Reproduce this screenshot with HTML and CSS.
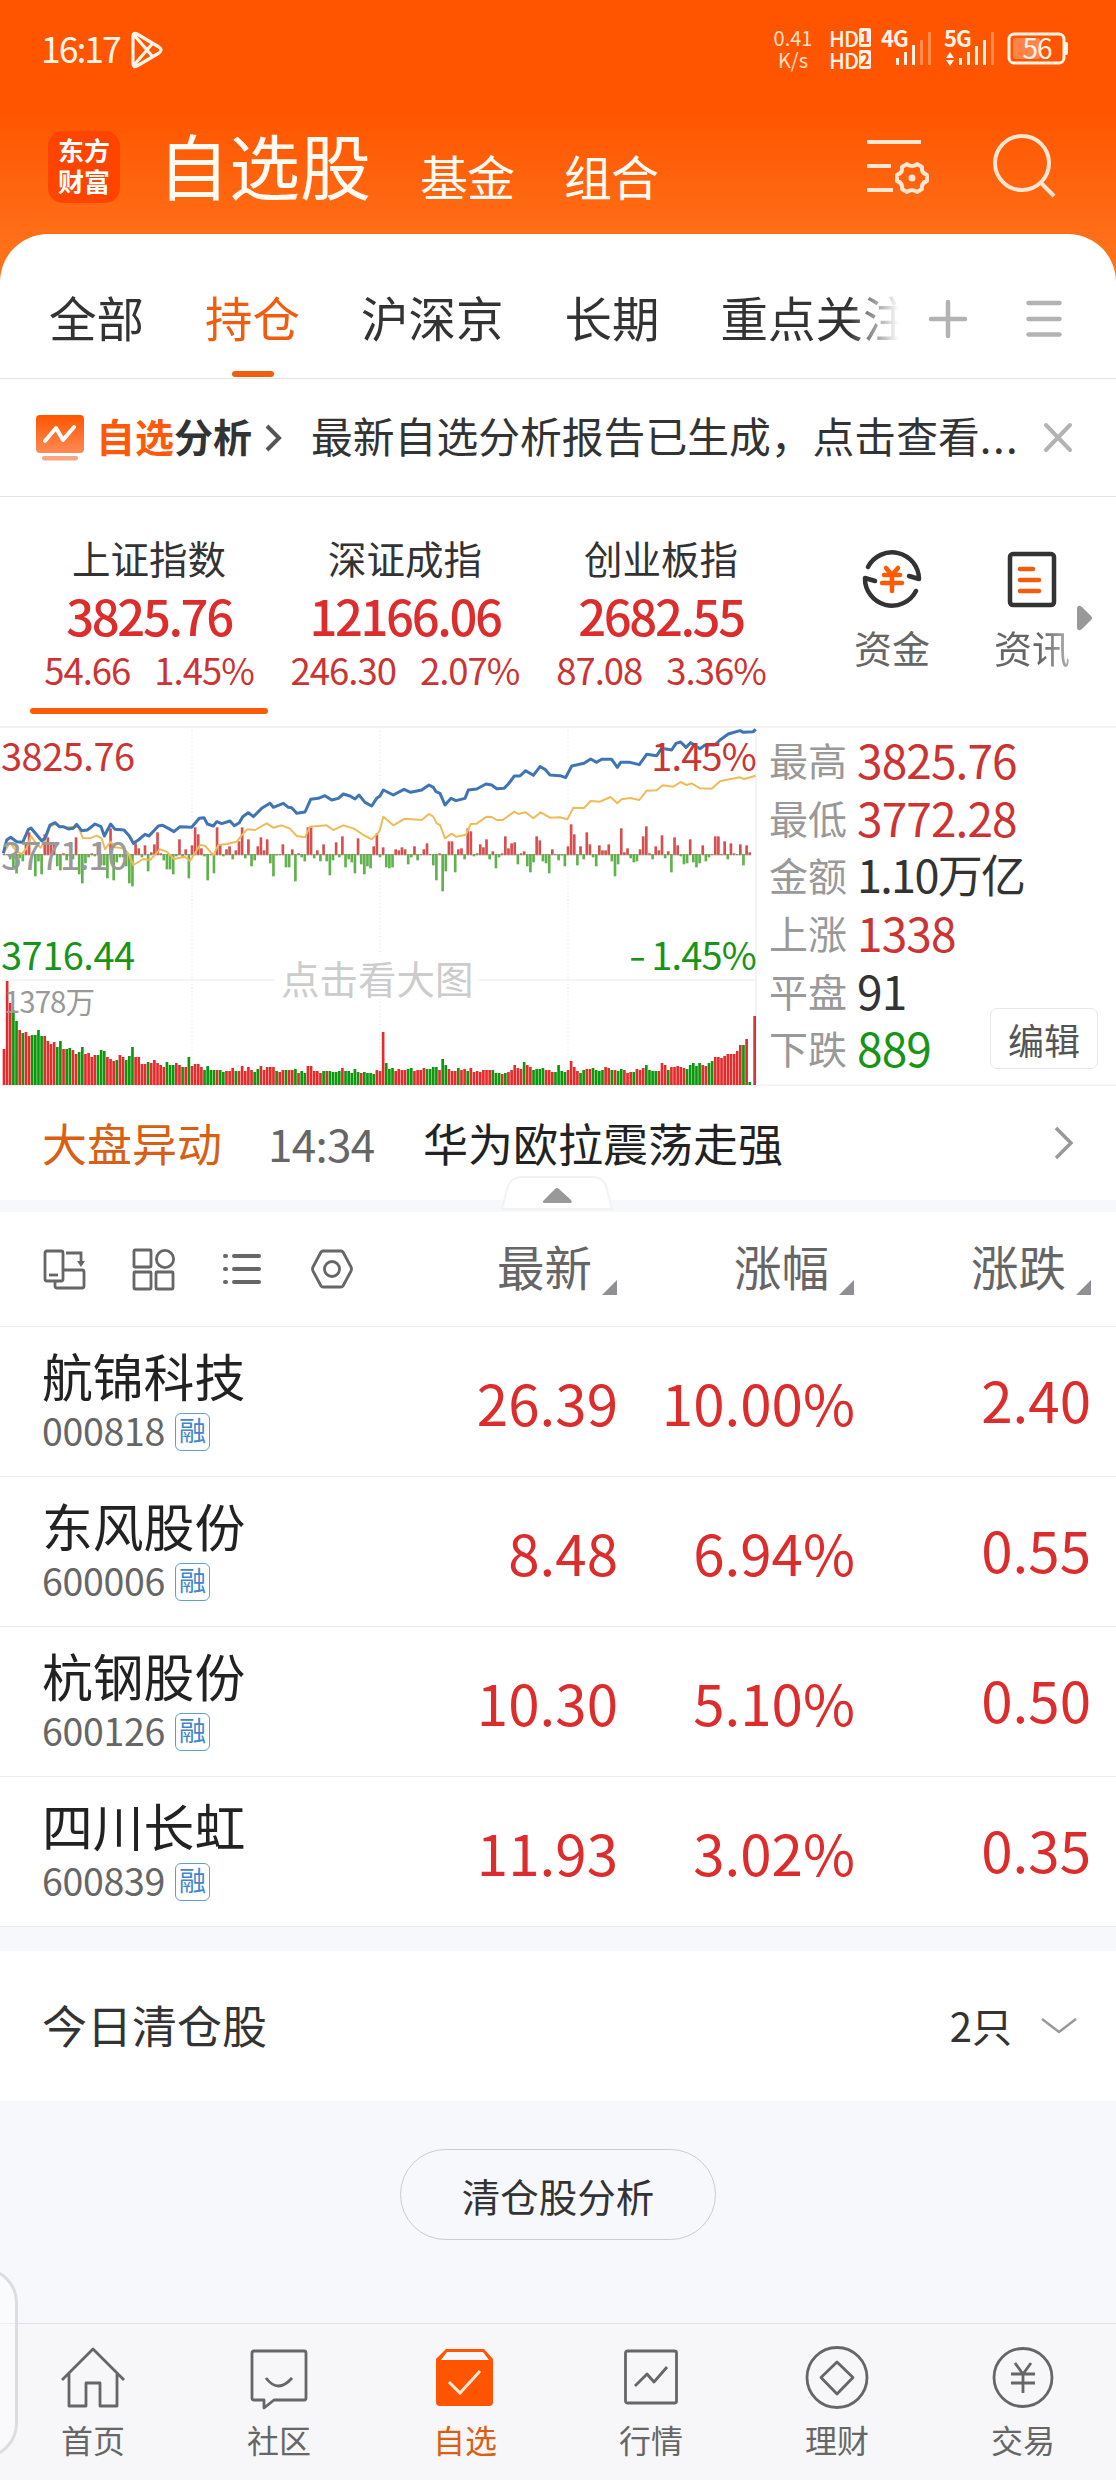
FILE: index.html
```html
<!DOCTYPE html>
<html lang="zh-CN">
<head>
    <meta charset="UTF-8">
    <meta name="viewport" content="width=device-width, initial-scale=1.0">
    <title>自选股</title>
    <link rel="stylesheet" href="styles.css">
</head>
<body>
    <div class="status-bar">
        <span class="clock">16:17</span>
        <svg class="play-icon" width="32" height="38" viewBox="0 0 32 38" fill="none" stroke="#fff4e6" stroke-width="3.2" stroke-linejoin="round">
            <path d="M2 5Q2 1 6 3L28 16Q32 19 28 22L6 35Q2 37 2 33ZM3 4L22 26M3 34L22 12"/>
        </svg>
        <div class="net-speed"><span>0.41</span><span>K/s</span></div>
        <div class="hd">
            <span>HD<b>1</b></span>
            <span>HD<b>2</b></span>
        </div>
        <svg class="signal" width="52" height="40" viewBox="0 0 52 40" fill="#fff4e6">
            <text x="0" y="18" class="signal-text">4G</text>
            <rect x="15" y="29" width="3" height="7"/><rect x="23" y="23" width="3" height="13"/><rect x="31" y="16" width="3" height="20"/>
            <rect x="39" y="11" width="3" height="25" opacity=".35"/><rect x="47" y="3" width="3" height="33" opacity=".35"/>
        </svg>
        <svg class="signal second" width="52" height="40" viewBox="0 0 52 40" fill="#fff4e6">
            <text x="0" y="18" class="signal-text">5G</text>
            <path d="M2 29L6 23L10 29ZM2 31H10L6 37Z"/>
            <rect x="15" y="29" width="3" height="7"/><rect x="23" y="23" width="3" height="13"/><rect x="31" y="17" width="3" height="19"/>
            <rect x="39" y="11" width="3" height="25"/><rect x="47" y="3" width="3" height="33" opacity=".35"/>
        </svg>
        <svg class="battery" width="62" height="34" viewBox="0 0 62 34">
            <rect x="2" y="2" width="55" height="29" rx="5" fill="none" stroke="#fff4e6" stroke-width="3"/>
            <rect x="6" y="6" width="27" height="21" rx="2" fill="#ff8448"/>
            <path d="M58 10h1.500q1.500 0 1.500 2v9q0 2-1.500 2H58Z" fill="#fff4e6"/>
            <text x="30" y="27" text-anchor="middle" class="battery-text">56</text>
        </svg>
    </div>

    <header class="title-bar">
        <div class="logo"><span>东方</span><span>财富</span></div>
        <h1>自选股</h1>
        <a class="title-link">基金</a>
        <a class="title-link">组合</a>
        <svg class="manage-icon" width="64" height="62" viewBox="0 0 64 62" fill="none" stroke="#ffe6d3" stroke-width="4">
            <path d="M1 7H55M1 31H25M1 55H27"/>
            <path d="M41 29Q46 33 51 29L56 32Q55 38 61 40V46Q55 48 56 54L51 57Q46 53 41 57L36 54Q37 48 31 46V40Q37 38 36 32Z" stroke-linejoin="round"/>
            <circle cx="46" cy="43" r="3.500" fill="#ffe6d3" stroke="none"/>
        </svg>
        <svg class="search-icon" width="66" height="66" viewBox="0 0 66 66" fill="none" stroke="#ffe6d3" stroke-width="4">
            <circle cx="30" cy="30" r="27"/>
            <path d="M48 49L62 63"/>
        </svg>
    </header>

    <main class="sheet">
        <nav class="tabs">
            <div class="tab-list">
                <a>全部</a>
                <a class="active">持仓</a>
                <a>沪深京</a>
                <a>长期</a>
                <a>重点关注</a>
            </div>
            <svg class="plus-icon" width="40" height="40" viewBox="0 0 40 40" stroke="#b3b3b3" stroke-width="4.500" stroke-linecap="round"><path d="M3 20H37M20 3V37"/></svg>
            <svg class="menu-icon" width="36" height="40" viewBox="0 0 36 40" stroke="#b3b3b3" stroke-width="4.500" stroke-linecap="round"><path d="M2.500 4H33.500M2.500 20H33.500M2.500 35.500H33.500"/></svg>
        </nav>

        <div class="notice">
            <svg class="notice-icon" width="48" height="46" viewBox="0 0 48 46" fill="none">
                <defs><linearGradient id="ng" x1="0" y1="0" x2="0" y2="1"><stop offset="0" stop-color="#ff5500"/><stop offset="1" stop-color="#ff8a55"/></linearGradient></defs>
                <rect width="48" height="38" rx="4" fill="url(#ng)"/>
                <rect x="6" y="41" width="36" height="4.500" rx="2" fill="#f7a583"/>
                <path d="M9 26L20 13L27 25L38 12" stroke="#fff" stroke-width="4" stroke-linejoin="round" stroke-linecap="round"/>
            </svg>
            <strong class="notice-title"><em>自选</em>分析</strong>
            <svg class="notice-arrow" width="18" height="30" viewBox="0 0 18 30" fill="none" stroke="#555" stroke-width="4"><path d="M2 3L14 15L2 27"/></svg>
            <span class="notice-text">最新自选分析报告已生成，点击查看<i>...</i></span>
            <svg class="close-icon" width="30" height="32" viewBox="0 0 30 32" stroke="#b3b3b3" stroke-width="4" stroke-linecap="round"><path d="M3 3L27 28M27 3L3 28"/></svg>
        </div>

        <section class="indices">
            <div class="index active">
                <span class="index-name">上证指数</span>
                <span class="index-value">3825.76</span>
                <span class="index-change"><span>54.66</span><span>1.45%</span></span>
            </div>
            <div class="index">
                <span class="index-name">深证成指</span>
                <span class="index-value">12166.06</span>
                <span class="index-change"><span>246.30</span><span>2.07%</span></span>
            </div>
            <div class="index">
                <span class="index-name">创业板指</span>
                <span class="index-value">2682.55</span>
                <span class="index-change"><span>87.08</span><span>3.36%</span></span>
            </div>
            <div class="tool">
                <svg width="60" height="62" viewBox="0 0 60 62" fill="none" stroke="#333" stroke-width="4.500" stroke-linejoin="round">
                    <path d="M6 20A27 27 0 0 1 57 32L47 29" stroke-linecap="round"/>
                    <path d="M54 44A27 27 0 0 1 3 31L13 34" stroke-linecap="round"/>
                    <path d="M24 21L30 28L36 21M22 28H38M20 36H40M30 28V44" stroke="#ff5a00" stroke-linecap="round"/>
                </svg>
                <span>资金</span>
            </div>
            <div class="tool news">
                <svg width="60" height="62" viewBox="0 0 60 62" fill="none" stroke="#333" stroke-width="4.500">
                    <rect x="8" y="7" width="44" height="51" rx="3"/>
                    <path d="M18 22H31M18 33H37M18 44H37" stroke="#f25c0f" stroke-linecap="round"/>
                </svg>
                <span>资讯</span>
            </div>
            <svg class="more-arrow" width="16" height="26" viewBox="0 0 16 26" fill="#999"><path d="M0 3Q1-1 5 2L14 11Q16 13 14 15L5 24Q1 27 0 23Z"/></svg>
        </section>

        <section class="market">
            <div class="chart">
                <svg class="chart-svg" viewBox="0 48 2280 1086">
                    <path class="grid" d="M0 51H2271M2268 51V1125M0 810H2271M0 1125H2271"/>
                    <path class="grid-dots" d="M576 51V1125M1140 51V1125M1704 51V1125"/>
                    <g id="volume"></g>
                    <g id="momentum"></g>
                    <polyline class="line-avg" points="10,430 30,398 50,425 65,432 80,415 93,378 108,400 122,413 135,395 150,350 165,342 190,352 235,350 248,384 270,385 290,377 305,385 315,418 332,395 345,412 370,415 385,430 400,465 430,447 450,450 480,418 500,425 522,447 555,440 570,453 600,405 615,407 640,436 655,405 680,402 710,395 730,370 742,358 765,360 800,340 820,353 845,346 870,356 890,378 915,382 930,350 980,346 1000,360 1030,346 1062,356 1090,375 1115,388 1138,365 1150,320 1180,346 1215,326 1265,330 1287,312 1300,320 1310,340 1320,345 1335,385 1355,371 1368,380 1398,374 1412,342 1430,341 1460,320 1475,321 1490,330 1508,330 1543,305 1555,312 1577,307 1600,325 1622,307 1650,323 1680,322 1702,328 1720,293 1752,294 1772,273 1800,275 1832,261 1852,280 1865,268 1890,264 1918,270 1940,242 1970,241 1988,226 2020,230 2042,216 2060,225 2075,220 2100,235 2135,236 2160,214 2180,209 2220,202 2232,207 2267,197"/>
                    <polyline class="line-price" points="10,430 20,390 32,382 50,395 68,397 85,358 93,354 108,372 125,392 135,385 150,345 165,338 178,350 190,350 205,357 220,355 230,343 245,362 262,360 285,342 303,350 313,378 332,342 345,358 372,360 388,378 400,400 415,390 435,373 447,378 475,348 488,346 505,355 522,365 540,350 575,352 598,325 612,323 622,342 640,348 650,335 665,341 690,333 703,347 718,338 728,320 745,308 760,320 785,295 810,280 820,292 850,280 865,292 875,293 890,310 915,306 932,268 955,265 975,257 995,270 1015,265 1030,252 1050,258 1065,267 1077,255 1095,277 1115,288 1130,265 1140,258 1150,240 1180,255 1212,238 1232,247 1265,240 1287,225 1300,232 1308,245 1320,250 1335,285 1353,265 1368,272 1395,265 1405,240 1430,237 1458,222 1475,225 1490,236 1512,235 1525,222 1543,198 1560,198 1577,182 1600,196 1620,170 1635,178 1650,195 1680,197 1697,203 1715,168 1752,160 1772,147 1790,157 1805,148 1835,148 1852,172 1862,157 1890,157 1918,164 1940,133 1970,137 1985,115 2015,120 2028,100 2042,96 2058,112 2072,98 2100,116 2115,105 2145,105 2160,90 2185,72 2220,62 2230,67 2260,65 2267,58"/>
                </svg>
                <span class="label high">3825.76</span>
                <span class="label high-pct">1.45%</span>
                <span class="label base">3771.10</span>
                <span class="label low">3716.44</span>
                <span class="label low-pct"><i>-</i>1.45%</span>
                <span class="label vol">1378万</span>
                <span class="label hint">点击看大图</span>
            </div>
            <div class="stats">
                <div><span>最高</span><b class="up">3825.76</b></div>
                <div><span>最低</span><b class="up">3772.28</b></div>
                <div><span>金额</span><b class="amount">1.10万亿</b></div>
                <div><span>上涨</span><b class="up">1338</b></div>
                <div><span>平盘</span><b>91</b></div>
                <div><span>下跌</span><b class="down">889</b></div>
                <button class="edit-button">编辑</button>
            </div>
        </section>

        <div class="alert-row">
            <span class="alert-title">大盘异动</span>
            <span class="alert-time">14:34</span>
            <span class="alert-text">华为欧拉震荡走强</span>
            <svg width="20" height="34" viewBox="0 0 20 34" fill="none" stroke="#999" stroke-width="3.500"><path d="M2 2L17 17L2 32"/></svg>
        </div>
        <div class="band">
            <svg class="collapse" width="112" height="34" viewBox="0 0 112 34">
                <path d="M1 33L6 13Q9 1 21 1H91Q103 1 106 13L111 33Z" fill="#fff" stroke="#f1f2f4" stroke-width="2"/>
                <path d="M43 24L54 13Q56 11 58 13L70 24Q72 27 69 27H44Q40 27 43 24Z" fill="#999"/>
            </svg>
        </div>

        <section class="stocks">
            <div class="stocks-head">
                <div class="view-icons">
                    <svg width="44" height="44" viewBox="0 0 44 44" fill="none" stroke="#666" stroke-width="2.800">
                        <rect x="2" y="4" width="18" height="30" rx="2"/><path d="M6 28H15"/>
                        <path d="M12 34V39Q12 41 14 41H39Q41 41 41 39V25Q41 23 39 23H20M23 6H38V17"/><path d="M34 14H42L38 20Z" fill="#666" stroke="none"/>
                    </svg>
                    <svg width="44" height="44" viewBox="0 0 44 44" fill="none" stroke="#666" stroke-width="2.800">
                        <rect x="2" y="3" width="17" height="17" rx="1"/><circle cx="33" cy="12" r="8.600"/>
                        <rect x="2" y="25" width="17" height="17" rx="1"/><rect x="24" y="25" width="17" height="17" rx="1"/>
                    </svg>
                    <svg width="44" height="44" viewBox="0 0 44 44" stroke="#666" stroke-width="4" stroke-linecap="round">
                        <path d="M4 9H5M13 9H38M4 22H5M13 22H38M4 35H5M13 35H38"/>
                    </svg>
                    <svg width="44" height="44" viewBox="0 0 44 44" fill="none" stroke="#666" stroke-width="2.800" stroke-linejoin="round">
                        <path d="M13 4H31Q32 4 33 5L41 20Q42 22 41 24L33 39Q32 40 31 40H13Q12 40 11 39L3 24Q2 22 3 20L11 5Q12 4 13 4Z"/><circle cx="22" cy="22" r="7.500"/>
                    </svg>
                </div>
                <span class="sort">最新</span>
                <span class="sort">涨幅</span>
                <span class="sort">涨跌</span>
            </div>
            <div class="stock">
                <div class="stock-name">航锦科技<small>000818<i>融</i></small></div>
                <span>26.39</span><span>10.00%</span><span>2.40</span>
            </div>
            <div class="stock">
                <div class="stock-name">东风股份<small>600006<i>融</i></small></div>
                <span>8.48</span><span>6.94%</span><span>0.55</span>
            </div>
            <div class="stock">
                <div class="stock-name">杭钢股份<small>600126<i>融</i></small></div>
                <span>10.30</span><span>5.10%</span><span>0.50</span>
            </div>
            <div class="stock">
                <div class="stock-name">四川长虹<small>600839<i>融</i></small></div>
                <span>11.93</span><span>3.02%</span><span>0.35</span>
            </div>
        </section>

        <div class="cleared">
            <span>今日清仓股</span>
            <span class="count">2只</span>
            <svg width="36" height="18" viewBox="0 0 36 18" fill="none" stroke="#999" stroke-width="2.500"><path d="M1 2L18 15L35 2"/></svg>
        </div>
        <div class="cleared-action"><button>清仓股分析</button></div>
    </main>

    <footer class="bottom-nav">
        <a>
            <svg width="68" height="68" viewBox="0 0 68 68" fill="none" stroke="#666" stroke-width="2.800" stroke-linejoin="round">
                <path d="M3 36L34 5L65 36M10 30V62H27V39H41V62H58V30"/>
            </svg>
            首页
        </a>
        <a>
            <svg width="68" height="68" viewBox="0 0 68 68" fill="none" stroke="#666" stroke-width="2.800" stroke-linejoin="round">
                <path d="M9 7H59Q61 7 61 9V54Q61 56 59 56H29L19 64V56H9Q7 56 7 54V9Q7 7 9 7Z"/><path d="M21 34Q33 50 47 34"/>
            </svg>
            社区
        </a>
        <a class="active">
            <svg width="68" height="68" viewBox="0 0 68 68" fill="none">
                <path d="M15 5H53L62 15V58Q62 62 58 62H9Q5 62 5 58V15Z" fill="#ff5500"/>
                <path d="M16 8H52L58 16H10Z" fill="#f7f7fa"/><path d="M18 38L29 49L49 27" stroke="#ffe9d6" stroke-width="3"/>
            </svg>
            自选
        </a>
        <a>
            <svg width="68" height="68" viewBox="0 0 68 68" fill="none" stroke="#666" stroke-width="2.800" stroke-linejoin="round">
                <rect x="8.500" y="7" width="51" height="52" rx="2"/><path d="M18 42L30 30L37 38L50 23"/>
            </svg>
            行情
        </a>
        <a>
            <svg width="68" height="68" viewBox="0 0 68 68" fill="none" stroke="#666" stroke-width="2.800" stroke-linejoin="round">
                <circle cx="34" cy="33.500" r="30"/><path d="M34 18L50 33.500L34 50L18 33.500Z"/>
            </svg>
            理财
        </a>
        <a>
            <svg width="68" height="68" viewBox="0 0 68 68" fill="none" stroke="#666" stroke-width="2.800">
                <circle cx="34" cy="33.500" r="29"/><path d="M26 19L34 30L42 19M22 30H46M22 39H46M34 30V49"/>
            </svg>
            交易
        </a>
    </footer>
    <div class="edge-handle"></div>

    <script src="chart.js"></script>
</body>
</html>
```
FILE: styles.css
```css
* {
    box-sizing: border-box;
}

body {
    margin: 0;
    width: 1116px;
    height: 2480px;
    overflow: hidden;
    position: relative;
    display: flex;
    flex-direction: column;
    font-family: "Noto Sans CJK SC", sans-serif;
    color: #333;
    background: #f7f8fb linear-gradient(#ff5500 0, #ff5500 110px, #ff7019 245px) no-repeat top / 100% 300px;
}

h1 {
    margin: 0;
    font-weight: 400;
}

em,
i {
    font-style: normal;
}

svg {
    display: block;
    flex: none;
}

button {
    font-family: inherit;
    padding: 0;
    background: none;
}

/* Status bar */
.status-bar {
    height: 98px;
    padding: 0 47px 0 41px;
    display: flex;
    align-items: center;
    color: #fff4e6;
}

.clock {
    width: 90px;
    margin-top: -2px;
    font-size: 35.5px;
    line-height: 40px;
    letter-spacing: -2px;
}

.play-icon {
    margin-top: 1px;
    margin-right: auto;
}

.net-speed {
    width: 40px;
    margin-right: 16px;
    display: flex;
    flex-direction: column;
    align-items: center;
    font-size: 20px;
    line-height: 22px;
    color: #ffe0c8;
}

.hd {
    width: 52px;
    display: flex;
    flex-direction: column;
    gap: 2px;
    font-size: 21.5px;
    font-weight: 500;
    line-height: 20px;
    letter-spacing: -1px;
}

.hd span {
    display: flex;
}

.hd b {
    width: 12px;
    height: 19px;
    margin-left: 1px;
    background: #fff4e6;
    color: #ff5500;
    border-radius: 2px;
    font-size: 17px;
    line-height: 17px;
    letter-spacing: 0;
    text-align: center;
}

.signal {
    overflow: visible;
}

.signal.second {
    margin: 0 11px 0 11px;
}

.signal-text {
    font-size: 22px;
    font-weight: 700;
    letter-spacing: -1px;
}

.battery-text {
    font-size: 28px;
    fill: #fff4e6;
    letter-spacing: -1px;
}

/* Title bar */
.title-bar {
    height: 136px;
    padding: 33px 0 0 48px;
    display: flex;
    align-items: flex-start;
    color: #fffaf2;
}

.logo {
    width: 72px;
    height: 72px;
    padding: 3px 0 0 10px;
    border-radius: 15px;
    background: #ff4400;
    display: flex;
    flex-direction: column;
    font-size: 26px;
    font-weight: 700;
    line-height: 31px;
    color: #fff;
}

.title-bar h1 {
    width: 256px;
    padding-left: 38px;
    margin-top: -6px;
    font-size: 71px;
    line-height: 76px;
    white-space: nowrap;
}

.title-bar h1 + .title-link {
    margin-left: 44px;
}

.title-link {
    width: 144px;
    margin-top: 16px;
    font-size: 48px;
    line-height: 56px;
    letter-spacing: -1px;
}

.manage-icon {
    margin: 4px 62px 0 158px;
}

.search-icon {
    margin-top: 2px;
}

/* Sheet */
.sheet {
    flex: 1;
}

.tabs {
    height: 145px;
    padding-left: 49px;
    border-radius: 48px 48px 0 0;
    border-bottom: 1px solid #e3e3e3;
    background: #fff;
    display: flex;
    align-items: center;
}

.tab-list {
    width: 850px;
    height: 145px;
    display: flex;
    gap: 61px;
    overflow: hidden;
    white-space: nowrap;
    font-size: 47.5px;
    line-height: 165px;
    -webkit-mask-image: linear-gradient(90deg, #000 800px, transparent 850px);
    mask-image: linear-gradient(90deg, #000 800px, transparent 850px);
}

.tab-list a {
    flex: none;
}

.tab-list .active {
    color: #f25c0f;
    position: relative;
}

.tab-list .active::after {
    content: "";
    position: absolute;
    left: 27px;
    bottom: 2px;
    width: 42px;
    height: 6px;
    border-radius: 3px;
    background: #f25c0f;
}

.plus-icon {
    margin: 25px 58px 0 29px;
}

.menu-icon {
    margin-top: 25px;
}

.notice {
    height: 118px;
    padding-left: 36px;
    border-bottom: 1px solid #e3e3e3;
    background: #fff;
    display: flex;
    align-items: center;
}

.notice-title {
    width: 169px;
    margin-left: 12px;
    font-size: 39px;
    line-height: 44px;
    margin-top: -6px;
}

.notice-title em {
    color: #ff5a0a;
}

.notice-text {
    width: 732px;
    margin: -6px 0 0 28px;
    font-size: 41.8px;
    line-height: 50px;
    white-space: nowrap;
}

.notice-text i {
    letter-spacing: 1.5px;
}

.notice-arrow {
    margin-left: 0;
}

/* Indices */
.indices {
    height: 229px;
    padding-left: 21px;
    background: #fff;
    display: flex;
    position: relative;
}

.index {
    width: 256px;
    padding-top: 32px;
    display: flex;
    flex-direction: column;
    align-items: center;
    position: relative;
}

.index-name {
    font-size: 38.5px;
    line-height: 56px;
}

.index-value {
    font-size: 49px;
    font-weight: 500;
    line-height: 60px;
    letter-spacing: -2.4px;
    color: #dc2c2c;
}

.index-change {
    display: flex;
    gap: 24px;
    padding-top: 2px;
    font-size: 36.5px;
    line-height: 46px;
    letter-spacing: -1px;
    color: #cc3434;
}

.index.active::after {
    content: "";
    position: absolute;
    left: 9px;
    bottom: 12px;
    width: 238px;
    height: 6px;
    border-radius: 3px;
    background: #ff5a0a;
}

.tool {
    width: 140px;
    margin-left: 33px;
    padding-top: 50px;
    display: flex;
    flex-direction: column;
    align-items: center;
    font-size: 38px;
    line-height: 76px;
    color: #666;
}

.tool.news {
    margin-left: 0;
}

.tool.news span {
    -webkit-mask-image: linear-gradient(90deg, #000 60%, rgba(0, 0, 0, 0.5));
    mask-image: linear-gradient(90deg, #000 60%, rgba(0, 0, 0, 0.5));
}

.more-arrow {
    position: absolute;
    right: 23px;
    top: 108px;
}

/* Chart */
.market {
    height: 360px;
    border-top: 2px solid #f4f4f4;
    border-bottom: 2px solid #f4f4f4;
    background: #fff;
    display: flex;
}

.chart {
    width: 760px;
    position: relative;
}

.chart-svg {
    width: 760px;
    height: 362px;
    margin-top: -2px;
}

.grid {
    fill: none;
    stroke: #f2f2f2;
    stroke-width: 5;
}

.grid-dots {
    stroke: #eeeeee;
    stroke-width: 4;
    stroke-dasharray: 4 7;
}

.line-avg,
.line-price {
    fill: none;
    stroke-width: 6;
    stroke: #efbb59;
    stroke-linejoin: round;
}

.line-price {
    stroke-width: 9;
    stroke: #3f74b5;
}

.label {
    position: absolute;
    left: 1px;
    font-size: 38px;
    line-height: 40px;
    letter-spacing: -0.5px;
    color: #cc3434;
}

.high {
    top: 7px;
}

.high-pct,
.low-pct {
    left: auto;
    right: 4px;
    top: 7px;
    letter-spacing: -0.8px;
}

.low-pct i {
    display: inline-block;
    width: 14px;
    margin-right: 6px;
    transform: scaleX(1.3);
}

.base {
    top: 106px;
    color: #999;
    letter-spacing: -1.6px;
}

.low,
.low-pct {
    top: 206px;
    color: #189418;
}

.vol {
    left: 4px;
    top: 252px;
    font-size: 29.5px;
    letter-spacing: -1px;
    color: #999;
}

.hint {
    left: 275px;
    top: 227px;
    width: 203px;
    padding-left: 6px;
    line-height: 44px;
    font-size: 38.5px;
    letter-spacing: 0;
    color: #ccc;
    background: #fff;
}

.stats {
    flex: 1;
    padding: 2px 0 0 9px;
    position: relative;
}

.stats div {
    height: 57.7px;
    display: flex;
    align-items: center;
    font-size: 39px;
    line-height: 50px;
    color: #999;
}

.stats b {
    margin-left: 10px;
    font-size: 46px;
    font-weight: 400;
    letter-spacing: -0.9px;
    color: #333;
}

.stats .amount {
    font-size: 45px;
    letter-spacing: -1.7px;
}

.stats .up {
    color: #cc3434;
}

.stats .down {
    color: #189418;
}

.edit-button {
    position: absolute;
    right: 18px;
    bottom: 15px;
    width: 108px;
    height: 61px;
    border: 1px solid #e8e8e8;
    border-radius: 7px;
    font-size: 36px;
    line-height: 50px;
    color: #555;
    background: #fff;
}

/* Alert row */
.alert-row {
    height: 114px;
    padding: 0 42px 0 42px;
    background: #fff;
    display: flex;
    align-items: center;
    font-size: 45px;
    line-height: 106px;
}

.alert-row svg {
    margin-left: auto;
}

.alert-title {
    width: 226px;
    color: #d95f14;
}

.alert-time {
    width: 155px;
    font-size: 44px;
    letter-spacing: -0.7px;
    color: #666;
}

.alert-text {
    color: #222;
}

.band {
    height: 12px;
    position: relative;
}

.collapse {
    position: absolute;
    left: 501px;
    top: -24px;
}

/* Stock table */
.stocks {
    background: #fff;
}

.stocks-head,
.stock {
    display: grid;
    grid-template-columns: 397px 220px 237px 1fr;
    align-items: center;
    padding-right: 25px;
    border-bottom: 1px solid #ececec;
}

.stocks-head {
    height: 115px;
}

.view-icons {
    display: flex;
    gap: 45px;
    padding-left: 43px;
}

.sort {
    padding-right: 25px;
    position: relative;
    text-align: right;
    font-size: 47.5px;
    line-height: 50px;
    color: #666;
    margin-top: -6px;
}

.sort::after {
    content: "";
    position: absolute;
    right: 0;
    bottom: -4px;
    border-left: 15px solid transparent;
    border-bottom: 15px solid #8f8f94;
}

.stock {
    height: 150px;
}

.stock-name {
    padding-left: 42px;
    margin-top: -7px;
    font-size: 50.8px;
    line-height: 62px;
    color: #222;
}

.stock-name small {
    display: flex;
    align-items: center;
    padding-top: 2px;
    font-size: 37.5px;
    line-height: 44px;
    letter-spacing: -0.3px;
    color: #666;
}

.stock-name i {
    width: 35px;
    height: 38px;
    margin: 3px 0 0 10px;
    border: 1.5px solid #5f9ed6;
    border-radius: 6px;
    font-size: 27px;
    line-height: 31px;
    letter-spacing: 0;
    text-align: center;
    color: #3f85cf;
}

.stock > span {
    text-align: right;
    font-size: 56.5px;
    line-height: 70px;
    margin-top: -1px;
    margin-right: -1px;
    color: #dc2c2c;
}

.stock > span:last-child {
    margin-top: -8px;
    padding-right: 1px;
}

/* Cleared positions */
.cleared {
    height: 150px;
    margin-top: 24px;
    padding: 0 39px 0 42px;
    background: #fff;
    display: flex;
    align-items: center;
    font-size: 45px;
    line-height: 144px;
}

.cleared > span {
    margin-top: -2px;
}

.cleared .count {
    margin: -2px 29px 0 auto;
    font-size: 40px;
}

.cleared-action {
    padding-top: 48px;
    display: flex;
    justify-content: center;
}

.cleared-action button {
    width: 316px;
    height: 91px;
    border: 1.5px solid #ccc;
    border-radius: 46px;
    font-size: 38.5px;
    line-height: 80px;
    color: #333;
}

/* Bottom nav */
.bottom-nav {
    height: 157px;
    border-top: 1px solid #e0e1e4;
    background: #f7f7fa;
    display: flex;
}

.bottom-nav a {
    flex: 1;
    padding-top: 20px;
    display: flex;
    flex-direction: column;
    align-items: center;
    font-size: 32px;
    line-height: 54px;
    color: #666;
}

.bottom-nav .active {
    color: #d95f14;
}

.edge-handle {
    position: absolute;
    left: -60px;
    top: 2267px;
    width: 78px;
    height: 192px;
    border: 3px solid #dcdde0;
    border-radius: 36px;
    background: rgba(255, 255, 255, 0.4);
}
```
FILE: chart.js
```js
const STEP = 9.4;
const MID = 433;
const BOTTOM = 1125;

const volumes = [
    36, 104, 82, 75, 64, 55, 52, 53, 49, 50, 50, 55, 49, 49, 44, 41, 43, 38, 44, 36,
    36, 37, 35, 31, 33, 38, 31, 32, 28, 30, 30, 35, 34, 28, 26, 24, 25, 30, 28, 25,
    29, 38, 28, 28, 21, 21, 23, 22, 25, 22, 20, 18, 23, 20, 20, 22, 20, 18, 18, 28,
    19, 21, 21, 18, 15, 19, 15, 15, 15, 15, 13, 14, 14, 17, 14, 14, 19, 14, 18, 15,
    13, 16, 19, 15, 18, 18, 18, 14, 13, 15, 15, 15, 15, 16, 12, 14, 12, 19, 19, 14,
    14, 12, 14, 14, 14, 13, 13, 14, 17, 14, 14, 12, 16, 13, 12, 13, 12, 12, 11, 15,
    14, 53, 22, 16, 17, 14, 16, 15, 15, 16, 17, 14, 15, 15, 17, 16, 16, 18, 18, 15,
    26, 20, 16, 14, 14, 17, 15, 16, 14, 17, 13, 14, 13, 15, 15, 15, 15, 12, 12, 11,
    12, 13, 15, 20, 17, 16, 23, 20, 18, 15, 16, 16, 17, 15, 15, 13, 13, 20, 14, 13,
    15, 24, 18, 14, 12, 15, 16, 16, 17, 15, 14, 15, 18, 17, 15, 15, 14, 16, 15, 12,
    13, 13, 16, 15, 17, 20, 15, 14, 14, 14, 22, 20, 15, 18, 18, 19, 18, 17, 16, 20,
    22, 19, 22, 20, 19, 22, 24, 28, 28, 27, 29, 31, 31, 31, 34, 40, 40, 46, 3
];

const volumeColors = [
    'rrrggrgrrggggrrrrggr',
    'ggrrggrrrrgggrrrgrrg',
    'ggrrrrgrrrrrgggrrgrg',
    'rrrrggggrggrrrgrrrrr',
    'ggrrrrrgrrgrrgrggrrr',
    'rrgrggggrgggggrggggr',
    'rrgggrrrrggrrrrggggr',
    'ggrrrgrrgrrrrrrrgggr',
    'grrrrrgrrggggrrrgggg',
    'rrrrggrrggggrrgrggrr',
    'rgrrrggggrrrgrrrrrgg',
    'gggrrggrrrrrrrrrgrg'
].join('');

const momentum = [
    0, 0, -5, -13, -19, -4, -7, 10, 22, 0, -22, -7, -20, 20, 17, 10, 10, -12, -16, 1,
    -6, -2, -5, 17, -20, -29, -9, -3, 1, -2, 12, -11, -11, -24, 26, -26, -8, -3, -3, -12,
    -29, -32, 11, 6, -3, 9, -17, 2, 10, 22, 1, -6, -15, -15, -20, -2, 15, -3, 5, -24,
    9, 27, 20, 6, -2, -26, 0, -19, 27, 10, -2, 5, 8, -5, 4, 13, 27, -4, 15, -12,
    -6, 8, 17, 4, 15, -9, -22, -1, 0, 10, -13, -13, 5, -27, 1, -3, -7, 27, 27, -4,
    4, -7, 10, -7, -21, -6, 12, -3, 18, -13, -5, -8, -19, 16, -10, -20, -12, -14, 8, 21,
    -3, 7, -13, -14, -13, 5, 4, 7, 5, -10, -3, 8, -6, 0, 5, 11, 0, -11, -26, 1,
    -37, -17, 13, 13, -18, 5, 6, -5, 26, 23, -2, 1, 10, 7, 15, -5, 3, -14, -3, 1,
    18, 6, 11, 12, -10, 1, 3, -12, -18, -8, 18, 14, -7, -9, -19, 5, 0, -6, -1, -12,
    8, 30, 20, -11, 8, -5, 22, 10, -3, -12, 9, 4, 4, 10, -7, -22, -10, 26, 2, 6,
    -4, -8, -7, 5, 18, 28, 1, -5, 8, 4, 19, -4, 3, -18, 17, 9, -2, -10, -9, 15,
    -8, -13, -9, 9, -7, -3, 0, 18, 18, 0, 13, -5, 11, 1, 0, 10, -11, 9, 2
];

function addBar(group, x, y, height, fill) {
    const rect = document.createElementNS('http://www.w3.org/2000/svg', 'rect');
    rect.setAttribute('x', x);
    rect.setAttribute('y', y);
    rect.setAttribute('width', 8);
    rect.setAttribute('height', height);
    rect.setAttribute('fill', fill);
    group.appendChild(rect);
}

const volumeGroup = document.getElementById('volume');
volumes.forEach((v, i) => {
    const fill = volumeColors[i] === 'g' ? '#0c980c' : '#e42c2c';
    addBar(volumeGroup, 8 + i * STEP, BOTTOM - v * 3, v * 3, fill);
});
// closing auction
addBar(volumeGroup, 2260, 918, 207, '#d43434');

const momentumGroup = document.getElementById('momentum');
momentum.forEach((v, i) => {
    const x = 8 + i * STEP;
    addBar(momentumGroup, x, MID - 1, 4, '#a08070');
    if (v > 0) {
        addBar(momentumGroup, x, MID - v * 3, v * 3, '#d65050');
    } else if (v < 0) {
        addBar(momentumGroup, x, MID, -v * 3, '#60b34c');
    }
});
```
